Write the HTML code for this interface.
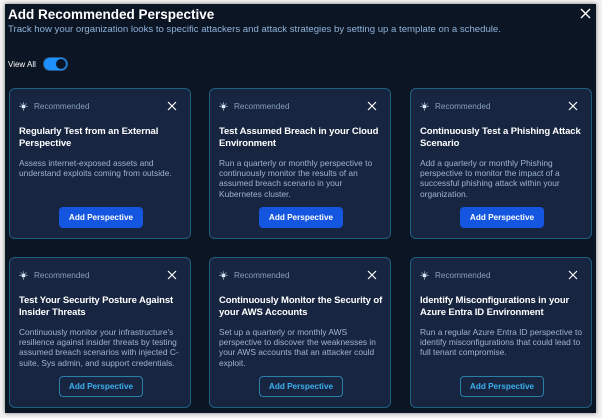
<!DOCTYPE html><html><head><style>
*{box-sizing:border-box;margin:0;padding:0}
body{width:602px;height:418px;background:#f2f2f2;font-family:"Liberation Sans",sans-serif;overflow:hidden;position:relative}
.dlg{position:absolute;left:5px;top:4px;width:591px;height:409px;background:#0c1524;box-shadow:0 0 4px rgba(0,0,0,.5)}
h1{position:absolute;left:3px;top:3px;font-size:13.5px;font-weight:bold;color:#fff}
.sub{position:absolute;left:3px;top:20px;font-size:9.6px;color:#8fb3d9}
.va{position:absolute;left:3px;top:56px;font-size:8px;color:#fff}
.tg{position:absolute;left:38px;top:53px;width:25px;height:14px;border-radius:7px;background:#1e90ff;border:1px solid #2a5a8a}
.tg:after{content:"";position:absolute;right:1px;top:1px;width:10px;height:10px;border-radius:50%;background:#0c1524}
.c{position:absolute;width:182px;height:151px;background:#172540;border:1px solid #1f5f7e;border-radius:6px}
.rec{position:absolute;left:9px;top:13px;font-size:8.2px;color:#8aa0c0;display:flex;align-items:center}
.rec svg{margin-right:6px}
.cx{position:absolute;right:13px;top:12px}
.t{position:absolute;left:9px;top:37px;right:2px;font-size:9.5px;font-weight:bold;color:#fff;line-height:11.5px;letter-spacing:-0.1px}
.d{position:absolute;left:9px;top:69px;right:12px;font-size:8.4px;color:#9fb4d0;line-height:10.2px}
.b{position:absolute;left:49px;bottom:10px;width:84px;height:21px;border-radius:4px;background:#1556e0;color:#fff;font-size:8.2px;font-weight:bold;text-align:center;line-height:21px}
.b.o{background:transparent;border:1px solid #2a7fa8;color:#3db0ee;line-height:19px}
</style></head><body><div class="dlg">
<h1>Add Recommended Perspective</h1>
<div class="sub">Track how your organization looks to specific attackers and attack strategies by setting up a template on a schedule.</div>
<svg style="position:absolute;right:5px;top:4px" width="11" height="11" viewBox="0 0 11 11"><path d="M1 1L10 10M10 1L1 10" stroke="#fff" stroke-width="1.4"/></svg>
<div class="va">View All</div><div class="tg"></div>
<svg width="0" height="0" style="position:absolute"><defs>
<symbol id="bulb" viewBox="0 0 10 10"><circle cx="5" cy="5" r="2.2" fill="#dde6f5"/><path d="M5 0.5V2M5 8V9.5M0.5 5H2M8 5H9.5M1.8 1.8L2.8 2.8M8.2 1.8L7.2 2.8" stroke="#dde6f5" stroke-width="0.9"/></symbol>
<symbol id="xx" viewBox="0 0 10 10"><path d="M1 1L9 9M9 1L1 9" stroke="#fff" stroke-width="1.2"/></symbol></defs></svg>
<div class="c" style="left:4px;top:84px"><div class="rec"><svg width="9" height="9"><use href="#bulb"/></svg>Recommended</div><svg class="cx" width="10" height="10"><use href="#xx"/></svg><div class="t">Regularly Test from an External Perspective</div><div class="d">Assess internet-exposed assets and understand exploits coming from outside.</div><div class="b">Add Perspective</div></div>
<div class="c" style="left:204px;top:84px"><div class="rec"><svg width="9" height="9"><use href="#bulb"/></svg>Recommended</div><svg class="cx" width="10" height="10"><use href="#xx"/></svg><div class="t">Test Assumed Breach in your Cloud Environment</div><div class="d">Run a quarterly or monthly perspective to continuously monitor the results of an assumed breach scenario in your Kubernetes cluster.</div><div class="b">Add Perspective</div></div>
<div class="c" style="left:405px;top:84px"><div class="rec"><svg width="9" height="9"><use href="#bulb"/></svg>Recommended</div><svg class="cx" width="10" height="10"><use href="#xx"/></svg><div class="t">Continuously Test a Phishing Attack Scenario</div><div class="d">Add a quarterly or monthly Phishing perspective to monitor the impact of a successful phishing attack within your organization.</div><div class="b">Add Perspective</div></div>
<div class="c" style="left:4px;top:253px"><div class="rec"><svg width="9" height="9"><use href="#bulb"/></svg>Recommended</div><svg class="cx" width="10" height="10"><use href="#xx"/></svg><div class="t">Test Your Security Posture Against Insider Threats</div><div class="d" style="right:6px">Continuously monitor your infrastructure's resilience against insider threats by testing assumed breach scenarios with injected C-suite, Sys admin, and support credentials.</div><div class="b o">Add Perspective</div></div>
<div class="c" style="left:204px;top:253px"><div class="rec"><svg width="9" height="9"><use href="#bulb"/></svg>Recommended</div><svg class="cx" width="10" height="10"><use href="#xx"/></svg><div class="t">Continuously Monitor the Security of your AWS Accounts</div><div class="d">Set up a quarterly or monthly AWS perspective to discover the weaknesses in your AWS accounts that an attacker could exploit.</div><div class="b o">Add Perspective</div></div>
<div class="c" style="left:405px;top:253px"><div class="rec"><svg width="9" height="9"><use href="#bulb"/></svg>Recommended</div><svg class="cx" width="10" height="10"><use href="#xx"/></svg><div class="t">Identify Misconfigurations in your Azure Entra ID Environment</div><div class="d" style="right:4px">Run a regular Azure Entra ID perspective to identify misconfigurations that could lead to full tenant compromise.</div><div class="b o">Add Perspective</div></div>
</div></body></html>
